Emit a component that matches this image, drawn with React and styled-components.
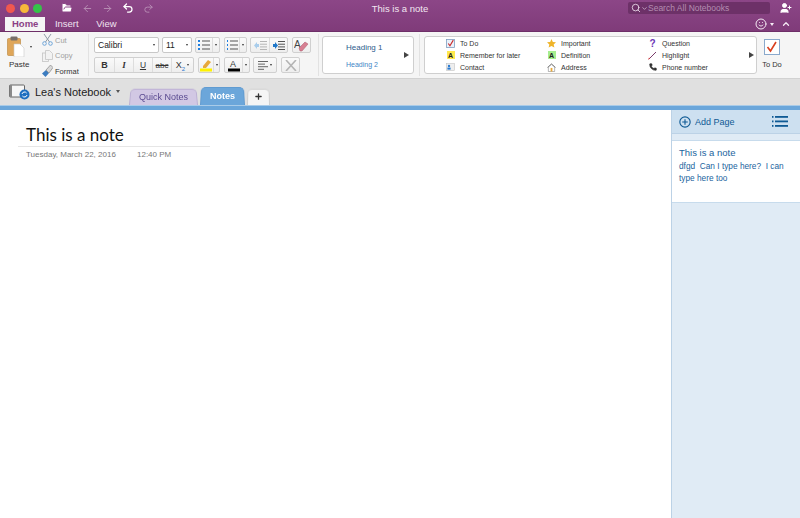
import React from "react";
import styled, { createGlobalStyle } from "styled-components";
import { Plus, ChevronUp, Search, ChevronDown, UserPlus, Undo2, Redo2, ArrowLeft, ArrowRight, FolderOpen, Smile, Phone } from "lucide-react";

const GlobalStyle = createGlobalStyle`
  html, body {
    margin: 0;
    padding: 0;
    background: #ffffff;
    font-family: "Liberation Sans", Arial, sans-serif;
  }
`;

const Page = styled.div`
  width: 800px;
  height: 518px;
  display: flex;
  flex-direction: column;
  overflow: hidden;
`;

const TitleBar = styled.div`
  height: 32px;
  flex: none;
  background: linear-gradient(#8c4687, #7f3b79);
  color: #ffffff;
`;
const TopRow = styled.div`
  height: 16px;
  display: grid;
  grid-template-columns: 1fr 200px 1fr;
  align-items: center;
`;
const WindowTools = styled.div`
  display: flex;
  align-items: center;
  padding-left: 6px;
`;
const Light = styled.span`
  width: 9px;
  height: 9px;
  border-radius: 50%;
  margin-right: 4.5px;
  background: ${(p) => p.$color};
`;
const ToolIcon = styled.span`
  display: flex;
  width: 20.5px;
  justify-content: center;
  color: ${(p) => (p.$dim ? "#b98fb6" : "#ffffff")};
`;
const ToolGap = styled.span`
  width: 10px;
`;
const WindowTitle = styled.div`
  text-align: center;
  font-size: 9.5px;
  color: #f2e6f1;
`;
const RightTools = styled.div`
  display: flex;
  align-items: center;
  justify-content: flex-end;
  padding-right: 8px;
  gap: 10px;
`;
const SearchBox = styled.div`
  width: 142px;
  height: 12px;
  border-radius: 2px;
  background: #6d3168;
  display: flex;
  align-items: center;
  padding-left: 3px;
  box-sizing: border-box;
  font-size: 8.5px;
  color: #b48db1;
  white-space: nowrap;
`;
const BottomRow = styled.div`
  height: 16px;
  display: flex;
  align-items: flex-end;
  padding-left: 5px;
`;
const MenuTab = styled.div`
  height: 15px;
  line-height: 14px;
  font-size: 9.5px;
  padding: 0 ${(p) => p.$pad}px;
  color: ${(p) => (p.$active ? "#8a3f85" : "#f0e2ef")};
  background: ${(p) => (p.$active ? "#f5f5f5" : "transparent")};
  font-weight: ${(p) => (p.$active ? 700 : 400)};
`;
const MenuSpacer = styled.div`
  flex: 1;
`;
const FeedbackWrap = styled.div`
  display: flex;
  align-items: center;
  gap: 3px;
  padding: 0 9px 2px 0;
  color: #f5eaf4;
`;
const FeedbackCaret = styled.span`
  width: 0;
  height: 0;
  margin-right: 4px;
  border-left: 2px solid transparent;
  border-right: 2px solid transparent;
  border-top: 3px solid #f5eaf4;
`;

const Ribbon = styled.div`
  height: 46px;
  flex: none;
  background: #f5f5f5;
  border-bottom: 1px solid #d2d2d2;
  box-sizing: content-box;
  display: flex;
  border-top: 1px solid #6e2f68;
  margin-top: -1px;
`;
const PasteGroup = styled.div`
  width: 41px;
  flex: none;
  padding: 4px 0 0 7px;
  box-sizing: border-box;
  font-size: 8px;
  color: #333;
`;
const PasteTop = styled.div`
  display: flex;
  align-items: center;
  gap: 5px;
  height: 21px;
`;
const PasteLabel = styled.div`
  margin-top: 3px;
  padding-left: 2px;
`;
const EditColumn = styled.div`
  width: 46px;
  flex: none;
  display: flex;
  flex-direction: column;
  gap: 1.500px;
  padding-top: 1px;
  padding-left: 1px;
  box-sizing: border-box;
`;
const EditRow = styled.div`
  height: 14px;
  display: flex;
  align-items: center;
  gap: 2px;
  font-size: 7.5px;
  color: ${(p) => (p.$dim ? "#a0a0a0" : "#333")};
`;
const Sep = styled.div`
  width: 1px;
  margin: 2px ${(p) => p.$right}px 2px ${(p) => p.$left}px;
  background: #e2e2e2;
  flex: none;
`;
const FontArea = styled.div`
  width: 224px;
  flex: none;
  display: flex;
  flex-direction: column;
  gap: 4px;
  padding-top: 5px;
`;
const ToolRow = styled.div`
  height: 16px;
  display: flex;
`;
const Combo = styled.div`
  width: ${(p) => p.$w}px;
  margin-right: 3px;
  height: 16px;
  flex: none;
  box-sizing: border-box;
  background: #ffffff;
  border: 1px solid #c8c8c8;
  border-radius: 2px;
  display: flex;
  align-items: center;
  justify-content: space-between;
  padding: 0 3px;
  font-size: 8.5px;
  color: #222;
`;
const Caret = styled.span`
  width: 0;
  height: 0;
  flex: none;
  border-left: 1.5px solid transparent;
  border-right: 1.5px solid transparent;
  border-top: 2px solid #333;
`;
const BtnGroup = styled.div`
  height: 16px;
  flex: none;
  margin-right: ${(p) => p.$gap ?? 4}px;
  box-sizing: border-box;
  display: flex;
  border: 1px solid #d0d0d0;
  border-radius: 2px;
  background: linear-gradient(#fafafa, #eeeeee);
`;
const Btn = styled.div`
  width: ${(p) => p.$w ?? 19}px;
  display: flex;
  align-items: center;
  justify-content: center;
  gap: 2px;
  box-sizing: border-box;
  font-size: 8px;
  color: #333;
  & + & {
    border-left: 1px solid #dddddd;
  }
`;
const BoldGlyph = styled.span`
  font-size: 9px;
  font-weight: 700;
`;
const ItalicGlyph = styled.span`
  font-size: 9px;
  font-style: italic;
  font-family: "Liberation Serif", serif;
  font-weight: 700;
`;
const UnderGlyph = styled.span`
  font-size: 8.5px;
  text-decoration: underline;
`;
const ScriptGlyph = styled.span`
  font-size: 9px;
`;
const Sub = styled.sub`
  font-size: 6px;
  color: #2a7bd0;
  line-height: 0;
`;
const HeadingBox = styled.div`
  width: 92px;
  height: 38px;
  margin-top: 4px;
  flex: none;
  box-sizing: border-box;
  background: #ffffff;
  border: 1px solid #cfcfcf;
  border-radius: 3px;
  display: flex;
  align-items: center;
  padding: 0 4px 0 23px;
  justify-content: space-between;
`;
const HeadingList = styled.div`
  display: flex;
  flex-direction: column;
  gap: 8px;
  padding-top: 2px;
`;
const HeadingItem = styled.div`
  font-size: ${(p) => p.$size}px;
  line-height: 9px;
  color: ${(p) => p.$color};
`;
const MoreArrow = styled.span`
  width: 0;
  height: 0;
  flex: none;
  border-top: 3px solid transparent;
  border-bottom: 3px solid transparent;
  border-left: 5px solid #444;
`;
const TagBox = styled.div`
  width: 333px;
  height: 38px;
  margin-top: 4px;
  flex: none;
  box-sizing: border-box;
  background: #ffffff;
  border: 1px solid #cfcfcf;
  border-radius: 3px;
  display: flex;
  align-items: center;
  padding: 0 3px 0 21px;
`;
const TagColumn = styled.div`
  width: ${(p) => p.$w}px;
  flex: none;
  display: flex;
  flex-direction: column;
`;
const Tag = styled.div`
  height: 12px;
  display: flex;
  align-items: center;
  gap: 5px;
  font-size: 7px;
  color: #333;
  white-space: nowrap;
`;
const TagSlot = styled.span`
  width: 9px;
  height: 9px;
  flex: none;
  display: flex;
  align-items: center;
  justify-content: center;
`;
const TagLetter = styled.span`
  width: 8px;
  height: 8px;
  display: flex;
  align-items: center;
  justify-content: center;
  font-size: ${(p) => p.$size ?? 7}px;
  font-weight: 700;
  color: ${(p) => p.$color ?? "#222"};
  background: ${(p) => p.$bg ?? "transparent"};
`;
const TodoGroup = styled.div`
  width: 30px;
  flex: none;
  display: flex;
  flex-direction: column;
  align-items: center;
  padding-top: 7px;
  font-size: 7.5px;
  color: #333;
`;
const TodoLabel = styled.div`
  margin-top: 5px;
`;

const NotebookBar = styled.div`
  height: 26px;
  flex: none;
  background: #e0e0e0;
  display: flex;
  align-items: flex-end;
`;
const NotebookName = styled.div`
  width: 129px;
  flex: none;
  align-self: stretch;
  display: flex;
  align-items: center;
  padding: 0 0 1px 9px;
  box-sizing: border-box;
  font-size: 11px;
  color: #222;
  gap: 5px;
`;
const NotebookCaret = styled.span`
  width: 0;
  height: 0;
  border-left: 2.5px solid transparent;
  border-right: 2.5px solid transparent;
  border-top: 3px solid #555;
`;
const SectionTab = styled.div`
  height: ${(p) => p.$h}px;
  width: ${(p) => p.$w}px;
  flex: none;
  margin-right: 2px;
  position: relative;
  z-index: 0;
  color: ${(p) => p.$color};
  font-size: 9px;
  font-weight: ${(p) => (p.$bold ? 700 : 400)};
  display: flex;
  align-items: center;
  justify-content: center;
  &::before {
    content: "";
    position: absolute;
    inset: 0;
    z-index: -1;
    box-sizing: border-box;
    border-radius: 5px 5px 0 0;
    border: 1px solid ${(p) => p.$border};
    border-bottom: none;
    background: ${(p) => p.$bg};
    transform-origin: bottom;
    transform: perspective(40px) rotateX(6deg);
  }
`;
const BlueLine = styled.div`
  height: 5px;
  flex: none;
  background: #6ba6da;
  border-top: 1px solid #a9cbe8;
  box-sizing: border-box;
`;

const Main = styled.div`
  flex: 1;
  display: flex;
  min-height: 0;
`;
const NoteArea = styled.div`
  flex: 1;
  padding: 15px 0 0 18px;
`;
const NoteTitle = styled.div`
  width: 192px;
  box-sizing: border-box;
  padding: 0 0 1px 8px;
  border-bottom: 1px solid #e6e6e6;
  font-family: Lato, sans-serif;
  font-size: 17px;
  line-height: 20px;
  color: #111;
`;
const NoteMeta = styled.div`
  display: flex;
  padding: 3px 0 0 8px;
  font-size: 8px;
  color: #777;
`;
const MetaDate = styled.span`
  width: 111px;
`;
const Sidebar = styled.div`
  width: 129px;
  flex: none;
  background: #e0ebf5;
  border-left: 1px solid #bcd2e6;
  box-sizing: border-box;
  display: flex;
  flex-direction: column;
`;
const SidebarHead = styled.div`
  height: 24px;
  flex: none;
  background: #cde0f0;
  display: flex;
  align-items: center;
  justify-content: space-between;
  padding: 0 12px 0 7px;
  font-size: 9px;
  color: #0f5a94;
  border-bottom: 1px solid #bcd2e6;
  box-sizing: border-box;
`;
const AddPage = styled.div`
  display: flex;
  align-items: center;
  gap: 4px;
`;
const PageItem = styled.div`
  flex: none;
  height: 63px;
  margin-top: 6px;
  box-sizing: border-box;
  background: #ffffff;
  border-top: 1px solid #c7dbec;
  border-bottom: 1px solid #c7dbec;
  padding: 5px 3px 0 7px;
  color: #1a649e;
`;
const PageTitle = styled.div`
  font-size: 9.5px;
  line-height: 14px;
`;
const PagePreview = styled.div`
  font-size: 8.3px;
  line-height: 12px;
  white-space: pre-wrap;
`;

const Clipboard = () => (
  <svg width="18" height="21" viewBox="0 0 18 21">
    <rect x="0.500" y="2.500" width="13" height="17" rx="1" fill="#dfa659" stroke="#b98338" strokeWidth="0.6" />
    <rect x="3.500" y="0.500" width="7" height="4" rx="1" fill="#77706a" />
    <path d="M7 8h6l4 4v9H7z" fill="#ffffff" stroke="#c9c9c9" strokeWidth="0.6" />
  </svg>
);
const Scissors = () => (
  <svg width="11" height="12" viewBox="0 0 11 12" fill="none">
    <path d="M2 0l5.500 8M9 0L3.500 8" stroke="#8e9aa5" strokeWidth="1" />
    <circle cx="2.500" cy="9.500" r="1.800" stroke="#6fa5d8" />
    <circle cx="8.500" cy="9.500" r="1.800" stroke="#6fa5d8" />
  </svg>
);
const CopyIcon = () => (
  <svg width="11" height="12" viewBox="0 0 11 12" fill="#f2f2f2" stroke="#c4c4c4" strokeWidth="0.8">
    <rect x="0.500" y="3" width="6" height="8.500" />
    <path d="M3.500 .5h4l3 3v6h-7z" />
  </svg>
);
const Brush = () => (
  <svg width="11" height="12" viewBox="0 0 11 12">
    <path d="M0 8.500l4-3.500 3 3-3.500 4z" fill="#3b7cc0" />
    <path d="M4 5l4.500-5L11 2.500 7 8z" fill="#d9d9d9" stroke="#777" strokeWidth="0.6" />
  </svg>
);
const Bullets = ({ numbered }) => (
  <svg width="12" height="10" viewBox="0 0 12 10">
    {[1, 5, 9].map((y) => (
      <g key={y}>
        <rect x={numbered ? 1 : 0} y={y - 1} width={numbered ? 1 : 2} height="2" fill="#1f7fe0" />
        <rect x="4" y={y - 0.5} width="8" height="1" fill="#555" />
      </g>
    ))}
  </svg>
);
const Indent = ({ dim, flip }) => (
  <svg width="13" height="9" viewBox="0 0 13 9">
    {[0, 2.700, 5.400, 8].map((y) => (
      <rect key={y} x="6" y={y} width="7" height="1" fill={dim ? "#b5b5b5" : "#555"} />
    ))}
    <path d={flip ? "M1 3h2V1l3 3.500L3 8V6H1z" : "M5 3H3V1L0 4.500 3 8V6h2z"} fill={dim ? "#a9cdec" : "#1f77c9"} />
  </svg>
);
const Eraser = () => (
  <svg width="15" height="13" viewBox="0 0 15 13">
    <text x="0" y="9" fontSize="10" fill="#444" fontFamily="Liberation Sans">A</text>
    <path d="M5 9l6-6 3 2-6 7H6z" fill="#d77f92" stroke="#a85a6b" strokeWidth="0.5" />
  </svg>
);
const Highlighter = () => (
  <svg width="12" height="13" viewBox="0 0 12 13">
    <path d="M3 7l5-6 3 2-5 6H3z" fill="#e7a93a" />
    <rect x="0" y="9.500" width="12" height="3" fill="#fff200" />
  </svg>
);
const FontColor = () => (
  <svg width="12" height="13" viewBox="0 0 12 13">
    <text x="2" y="8" fontSize="9" fill="#333" fontFamily="Liberation Sans">A</text>
    <rect x="0" y="9.500" width="12" height="3" fill="#000000" />
  </svg>
);
const AlignIcon = () => (
  <svg width="10" height="9" viewBox="0 0 10 9" fill="#666">
    <rect width="10" height="1" />
    <rect y="2.600" width="7" height="1" />
    <rect y="5.200" width="10" height="1" />
    <rect y="7.800" width="6" height="1" />
  </svg>
);
const CrossIcon = () => (
  <svg width="12" height="11" viewBox="0 0 12 11" stroke="#b4b4b4" strokeWidth="1.600">
    <path d="M1 0l10 11M11 0L1 11" />
  </svg>
);
const CheckIcon = () => (
  <svg width="9" height="9" viewBox="0 0 8 8" fill="none">
    <rect x="0.500" y="0.500" width="7" height="7" fill="#eaf2fb" stroke="#7d9cc0" strokeWidth="0.7" />
    <path d="M2 4l1.500 2L6.500 1" stroke="#cc2a2a" strokeWidth="1" />
  </svg>
);
const Star = () => (
  <svg width="9" height="9" viewBox="0 0 10 10">
    <path d="M5 0l1.500 3.300 3.500.4-2.600 2.300.8 3.500L5 7.800 1.800 9.500l.8-3.500L0 3.700l3.500-.4z" fill="#efb429" />
  </svg>
);
const ContactIcon = () => (
  <svg width="9" height="8" viewBox="0 0 9 8">
    <rect x="0.300" y="0.300" width="8.400" height="7.400" fill="#eeeeee" stroke="#bbbbbb" strokeWidth="0.5" />
    <circle cx="3" cy="3" r="1.200" fill="#2a7bd0" />
    <rect x="1.400" y="4.600" width="3.200" height="2" fill="#2a7bd0" />
  </svg>
);
const HouseIcon = () => (
  <svg width="10" height="9" viewBox="0 0 10 9">
    <path d="M1.500 4v5h7V4L5 1z" fill="#ffffff" stroke="#777" strokeWidth="0.6" />
    <path d="M.5 4.500L5 .5l4.500 4" fill="none" stroke="#555" strokeWidth="0.7" />
    <rect x="4" y="5" width="2" height="4" fill="#e8a93a" />
  </svg>
);
const Pen = () => (
  <svg width="9" height="9" viewBox="0 0 9 9">
    <path d="M1 8L8 1" stroke="#7a3b6a" strokeWidth="1" />
    <path d="M0 9l2-1.500L1 6.500z" fill="#d73a3a" />
  </svg>
);
const BigCheck = () => (
  <svg width="16" height="16" viewBox="0 0 16 16" fill="none">
    <rect x="0.500" y="0.500" width="15" height="15" fill="#ffffff" stroke="#8aa9cc" />
    <path d="M3.500 8l3 4 5.500-9" stroke="#d9401f" strokeWidth="1.600" />
  </svg>
);
const NotebookIcon = () => (
  <svg width="21" height="16" viewBox="0 0 21 16">
    <rect x="0.500" y="1" width="15" height="12" rx="1" fill="#f7f7f7" stroke="#666" />
    <rect x="0.500" y="1" width="2.500" height="12" fill="#8a8a8a" />
    <circle cx="15.500" cy="10.500" r="5" fill="#1f6fc0" />
    <path d="M13 10a2.600 2.600 0 0 1 4.600-1M18 11a2.600 2.600 0 0 1-4.600 1" stroke="#ffffff" fill="none" />
  </svg>
);
const CirclePlus = () => (
  <svg width="12" height="12" viewBox="0 0 13 13" fill="none" stroke="#0f5a94" strokeWidth="1.200">
    <circle cx="6.500" cy="6.500" r="5.600" />
    <path d="M6.500 3.500v6M3.500 6.500h6" />
  </svg>
);
const ListIcon = () => (
  <svg width="16" height="11" viewBox="0 0 16 11" fill="#0f5a94">
    {[0, 4.500, 9].map((y) => (
      <g key={y}>
        <rect y={y} width="1.500" height="1.800" />
        <rect x="3" y={y} width="13" height="1.800" />
      </g>
    ))}
  </svg>
);

const App = () => {
  return (
    <Page>
      <GlobalStyle />
      <TitleBar>
        <TopRow>
          <WindowTools>
            <Light $color="#f0584f" />
            <Light $color="#f6b83a" />
            <Light $color="#35c249" />
            <ToolGap />
            <ToolIcon><FolderOpen size={12} fill="#ffffff" stroke="#8c4687" /></ToolIcon>
            <ToolIcon $dim><ArrowLeft size={11} /></ToolIcon>
            <ToolIcon $dim><ArrowRight size={11} /></ToolIcon>
            <ToolIcon><Undo2 size={12} strokeWidth={2.500} /></ToolIcon>
            <ToolIcon $dim><Redo2 size={11} /></ToolIcon>
          </WindowTools>
          <WindowTitle>This is a note</WindowTitle>
          <RightTools>
            <SearchBox>
              <Search size={10} color="#f0e2ef" />
              <ChevronDown size={7} color="#f0e2ef" />
              Search All Notebooks
            </SearchBox>
            <UserPlus size={12} fill="#ffffff" />
          </RightTools>
        </TopRow>
        <BottomRow>
          <MenuTab $active $pad={7}>Home</MenuTab>
          <MenuTab $pad={9.500}>Insert</MenuTab>
          <MenuTab $pad={8}>View</MenuTab>
          <MenuSpacer />
          <FeedbackWrap>
            <Smile size={12} />
            <FeedbackCaret />
            <ChevronUp size={10} strokeWidth={3} />
          </FeedbackWrap>
        </BottomRow>
      </TitleBar>

      <Ribbon>
        <PasteGroup>
          <PasteTop>
            <Clipboard />
            <Caret />
          </PasteTop>
          <PasteLabel>Paste</PasteLabel>
        </PasteGroup>
        <EditColumn>
          <EditRow $dim><Scissors />Cut</EditRow>
          <EditRow $dim><CopyIcon />Copy</EditRow>
          <EditRow><Brush />Format</EditRow>
        </EditColumn>
        <Sep $left={1} $right={5} />
        <FontArea>
          <ToolRow>
            <Combo $w={65}>Calibri<Caret /></Combo>
            <Combo $w={30}>11<Caret /></Combo>
            <BtnGroup>
              <Btn $w={16}><Bullets /></Btn>
              <Btn $w={7}><Caret /></Btn>
            </BtnGroup>
            <BtnGroup $gap={3}>
              <Btn $w={14}><Bullets numbered /></Btn>
              <Btn $w={7}><Caret /></Btn>
            </BtnGroup>
            <BtnGroup>
              <Btn $w={18}><Indent dim /></Btn>
              <Btn $w={18}><Indent flip /></Btn>
            </BtnGroup>
            <BtnGroup $gap={0}>
              <Btn $w={17}><Eraser /></Btn>
            </BtnGroup>
          </ToolRow>
          <ToolRow>
            <BtnGroup>
              <Btn $w={19}><BoldGlyph>B</BoldGlyph></Btn>
              <Btn $w={19}><ItalicGlyph>I</ItalicGlyph></Btn>
              <Btn $w={19}><UnderGlyph>U</UnderGlyph></Btn>
              <Btn $w={19}><s>abc</s></Btn>
              <Btn $w={22}><ScriptGlyph>X<Sub>2</Sub></ScriptGlyph><Caret /></Btn>
            </BtnGroup>
            <BtnGroup>
              <Btn $w={14}><Highlighter /></Btn>
              <Btn $w={6}><Caret /></Btn>
            </BtnGroup>
            <BtnGroup $gap={3}>
              <Btn $w={17}><FontColor /></Btn>
              <Btn $w={7}><Caret /></Btn>
            </BtnGroup>
            <BtnGroup>
              <Btn $w={22}><AlignIcon /><Caret /></Btn>
            </BtnGroup>
            <BtnGroup $gap={0}>
              <Btn $w={17}><CrossIcon /></Btn>
            </BtnGroup>
          </ToolRow>
        </FontArea>
        <Sep $left={0} $right={3} />
        <HeadingBox>
          <HeadingList>
            <HeadingItem $size={8} $color="#2c5c8c">Heading 1</HeadingItem>
            <HeadingItem $size={7} $color="#3f86c6">Heading 2</HeadingItem>
          </HeadingList>
          <MoreArrow />
        </HeadingBox>
        <Sep $left={5} $right={4} />
        <TagBox>
          <TagColumn $w={101}>
            <Tag><TagSlot><CheckIcon /></TagSlot>To Do</Tag>
            <Tag><TagSlot><TagLetter $bg="#ffe94d">A</TagLetter></TagSlot>Remember for later</Tag>
            <Tag><TagSlot><ContactIcon /></TagSlot>Contact</Tag>
          </TagColumn>
          <TagColumn $w={101}>
            <Tag><TagSlot><Star /></TagSlot>Important</Tag>
            <Tag><TagSlot><TagLetter $bg="#a6ee90">A</TagLetter></TagSlot>Definition</Tag>
            <Tag><TagSlot><HouseIcon /></TagSlot>Address</Tag>
          </TagColumn>
          <TagColumn $w={101}>
            <Tag><TagSlot><TagLetter $color="#6b35b5" $size={10}>?</TagLetter></TagSlot>Question</Tag>
            <Tag><TagSlot><Pen /></TagSlot>Highlight</Tag>
            <Tag><TagSlot><Phone size={8} fill="#333" color="#333" /></TagSlot>Phone number</Tag>
          </TagColumn>
          <MoreArrow />
        </TagBox>
        <TodoGroup>
          <BigCheck />
          <TodoLabel>To Do</TodoLabel>
        </TodoGroup>
      </Ribbon>

      <NotebookBar>
        <NotebookName>
          <NotebookIcon />
          Lea's Notebook
          <NotebookCaret />
        </NotebookName>
        <SectionTab $w={69} $h={17} $bg="#d2c8e4" $border="#bcb0d4" $color="#5a4a90">Quick Notes</SectionTab>
        <SectionTab $w={45} $h={19} $bg="#6ba6da" $border="#5f9ad0" $color="#ffffff" $bold>Notes</SectionTab>
        <SectionTab $w={23} $h={17} $bg="#f5f5f5" $border="#d0d0d0" $color="#333"><Plus size={9} strokeWidth={3.500} /></SectionTab>
      </NotebookBar>
      <BlueLine />

      <Main>
        <NoteArea>
          <NoteTitle>This is a note</NoteTitle>
          <NoteMeta>
            <MetaDate>Tuesday, March 22, 2016</MetaDate>
            <span>12:40 PM</span>
          </NoteMeta>
        </NoteArea>
        <Sidebar>
          <SidebarHead>
            <AddPage><CirclePlus />Add Page</AddPage>
            <ListIcon />
          </SidebarHead>
          <PageItem>
            <PageTitle>This is a note</PageTitle>
            <PagePreview>{"dfgd  Can I type here?  I can type here too"}</PagePreview>
          </PageItem>
        </Sidebar>
      </Main>
    </Page>
  );
};

export default App;
